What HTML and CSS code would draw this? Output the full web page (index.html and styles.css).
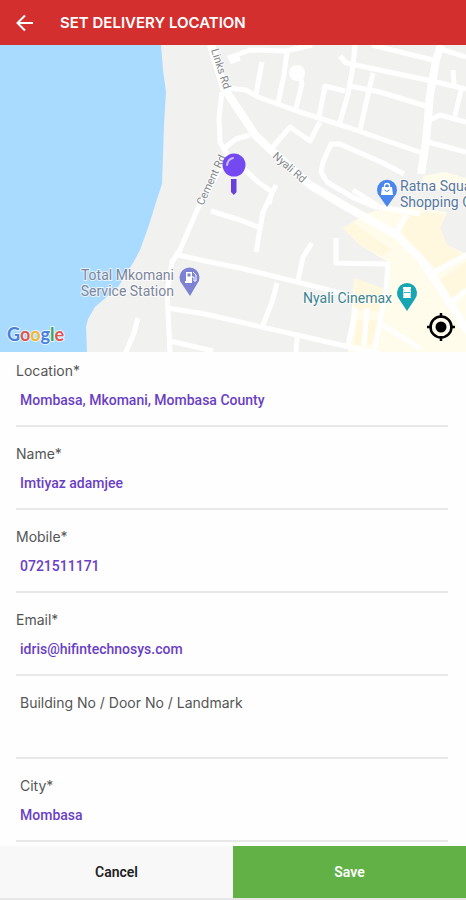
FILE: index.html
```html
<!DOCTYPE html>
<html lang="en">

<head>
    <meta charset="UTF-8">
    <meta name="viewport" content="width=device-width, initial-scale=1.0">
    <title>Set Delivery Location</title>
    <link rel="stylesheet" href="styles.css">
</head>

<body>
    <header class="topbar">
        <button type="button" class="back-btn" aria-label="Back">
            <svg width="18" height="18" viewBox="0 0 18 18">
                <path d="M17 9H2M9 1.5L1.5 9L9 16.5" />
            </svg>
        </button>
        <h1>SET DELIVERY LOCATION</h1>
    </header>

    <div class="map">
        <svg class="map-canvas" viewBox="0 45 466 307">
            <rect class="land" x="0" y="45" width="466" height="307" />
            <path class="water" d="M0 45H161L163 70L166 92L164 125L162 184L157 199L149 225L140 250L133 263L118 287L95 307L88 319L86 327L87 352H0Z" />

            <!-- commercial areas -->
            <path class="area" d="M353 222L365 214L385 208L415 207L447 212L440 228L447 245L466 254V352H348L354 280L388 290V262L360 245L343 228Z" />
            <path class="area-dark" d="M353 222L343 228L360 245L382 256L392 250Z" />
            <path class="area-dark" d="M407 212L445 214L440 228L447 245L462 254L436 268L420 253L402 236Z" />
            <path class="area-dark" d="M354 278L388 290L384 312L354 310Z" />
            <path class="area-dark" d="M440 280L466 262V290L452 300Z" />
            <path class="area-dark" d="M357 320L380 320L374 345L354 345Z" />
            <path class="area" d="M423 176L445 172L466 178V190H423Z" />

            <g class="roads">
                <path d="M222 92L219 118L220 142L228 156L223 164L198 208L180 250L172 262L167 292L170 352" />
                <path d="M222 150L236 139L250 135" />
                <path d="M240 165L258 182L272 192L269 204" />
                <path d="M228 88L246 90L258 97L300 112L350 128L422 153" />
                <path d="M228 58L250 50L286 51L312 45" />
                <path d="M230 62L240 58" />
                <path d="M262 62L256 94" />
                <path d="M287 51L284 75L278 103" />
                <path d="M300 76L302 84L296 108" />
                <path d="M319 117L325 86L345 91" />
                <path d="M355 45L353 66L348 94L340 122" />
                <path d="M373 73L369 90L360 130" />
                <path d="M340 56L346 63L384 71L432 81L466 89" />
                <path d="M372 45L437 61" />
                <path d="M350 86L380 92L426 106" />
                <path d="M430 120L440 115L466 122" />
                <path d="M428 142L466 152" />
                <path d="M461 90L455 116" />
                <path d="M453 70L454 84" />
                <path d="M441 49L466 57" />
                <path d="M272 148L290 127L310 141L320 122" />
                <path d="M378 208L354 198L327 182L321 172L323 162L331 144L340 144L383 163L404 174" />
                <path d="M353 190L380 207L420 214" />
                <path d="M211 211L240 220L258 227" />
                <path d="M276 185L263 212L256 252" />
                <path d="M174 254L205 261L240 268L297 282L345 294" />
                <path d="M312 243L303 257L298 280" />
                <path d="M277 283L272 302L263 325" />
                <path d="M167 308L205 314L240 322L297 335L380 354" />
                <path d="M170 341L213 351" />
                <path d="M297 338L296 352" />
                <path d="M138 318L134 333L125 354" />
                <path d="M336 238L336 263L388 264L386 290L374 352" />
                <path d="M356 308L348 345" />
                <path d="M367 308L364 346" />
                <path d="M382 325L420 348" />
                <path d="M396 232L407 215" />
                <path d="M433 273L468 254" />
                <path d="M450 304L466 290" />
            </g>
            <g class="roads roads-main">
                <path d="M211 45L224 88L256 136L272 151L310 185L345 206L370 220L397 235L420 258L443 292L468 332" />
                <path d="M441 45L436 60L430 95L426 142L421 174" />
            </g>
            <circle class="cul-de-sac" cx="297" cy="73" r="8" />

            <text class="road-name" transform="translate(211 50) rotate(72)">Links Rd</text>
            <text class="road-name" transform="translate(203 206) rotate(-65)">Cement Rd</text>
            <text class="road-name" transform="translate(272 157) rotate(41)">Nyali Rd</text>

            <!-- shopping -->
            <path fill="#4a86ec" d="M387 207L380 197A10 10 0 1 1 394 197Z" />
            <path fill="#fff" d="M382 187H392L393 195H381Z" />
            <path fill="none" stroke="#fff" stroke-width="1.3" d="M384.500 188V186A2.500 2.500 0 0 1 389.500 186V188" />
            <path fill="none" stroke="#4a86ec" d="M384.500 190Q387 193 389.500 190" />
            <text class="poi poi-shop" x="400" y="191">Ratna Square</text>
            <text class="poi poi-shop" x="400" y="207">Shopping Centre</text>

            <!-- fuel -->
            <path fill="#7d83d2" d="M190 296L182 284A10 10 0 1 1 197 284Z" />
            <path fill="#fff" d="M186 272H192V283H185V281H186Z" />
            <path fill="none" stroke="#fff" d="M192 277H194V281H196V275L193 272" />
            <rect fill="#7d83d2" x="187.500" y="273.500" width="3" height="3" />
            <text class="poi poi-fuel" x="174" y="280">Total Mkomani</text>
            <text class="poi poi-fuel" x="174" y="296">Service Station</text>

            <!-- cinema -->
            <path fill="#16a5b2" d="M407 311L399 299A10 10 0 1 1 415 299Z" />
            <path fill="#fff" d="M403 287H411V298H403Z" />
            <path fill="none" stroke="#16a5b2" stroke-width=".8" d="M402 290H404M402 293H404M402 296H404M410 290H412M410 293H412M410 296H412M404 292.500H410" />
            <text class="poi poi-cinema" x="392" y="303">Nyali Cinemax</text>

            <!-- selected spot -->
            <circle fill="#7549f2" cx="234" cy="165" r="11.500" />
            <path fill="none" stroke="#cbbcfb" stroke-width="2" stroke-linecap="round" d="M227 165Q228 159 233 158" />
            <path fill="#6840dc" d="M231 179H236.500V192L233.800 195L231 192Z" />

            <text class="brand" x="7" y="341"><tspan fill="#4a80dc">G</tspan><tspan fill="#e2544b">o</tspan><tspan fill="#efb92f">o</tspan><tspan fill="#4a80dc">g</tspan><tspan fill="#3da45a">l</tspan><tspan fill="#e2544b">e</tspan></text>
        </svg>

        <button type="button" class="locate-btn" aria-label="My location">
            <svg width="28" height="28" viewBox="0 0 28 28">
                <circle cx="14" cy="14" r="10.500" fill="none" stroke="#000" stroke-width="2.500" />
                <circle cx="14" cy="14" r="5.500" />
                <path d="M14 0V5M14 23V28M0 14H5M23 14H28" stroke="#000" stroke-width="2.500" />
            </svg>
        </button>
    </div>

    <form class="address-form" id="address-form">
        <div class="field">
            <label for="location">Location*</label>
            <input type="text" id="location" value="Mombasa, Mkomani, Mombasa County">
        </div>
        <div class="field">
            <label for="name">Name*</label>
            <input type="text" id="name" value="Imtiyaz adamjee">
        </div>
        <div class="field">
            <label for="mobile">Mobile*</label>
            <input type="tel" id="mobile" value="0721511171">
        </div>
        <div class="field">
            <label for="email">Email*</label>
            <input type="email" id="email" value="idris@hifintechnosys.com">
        </div>
        <div class="field field-indent">
            <label for="building">Building No / Door No / Landmark</label>
            <input type="text" id="building">
        </div>
        <div class="field field-indent">
            <label for="city">City*</label>
            <input type="text" id="city" value="Mombasa">
        </div>
    </form>

    <footer class="actions">
        <button type="button" class="cancel-btn">Cancel</button>
        <button type="submit" class="save-btn" form="address-form">Save</button>
    </footer>
</body>

</html>
```
FILE: styles.css
```css
* {
    box-sizing: border-box;
}

body {
    font-family: Roboto, "Liberation Sans", sans-serif;
    margin: 0;
    background: #fefefe;
    color: #444;
}

button {
    padding: 0;
    border: none;
    background: none;
    font-family: inherit;
    cursor: pointer;
}

.topbar {
    display: flex;
    align-items: center;
    gap: 26px;
    height: 45px;
    padding: 0 16px;
    background: #d32f2f;
}

.topbar h1 {
    margin: 0;
    font-family: Inter, sans-serif;
    font-size: 15px;
    font-weight: 600;
    color: #fff;
}

.back-btn svg {
    display: block;
    fill: none;
    stroke: #fff;
    stroke-width: 2;
}

.map {
    position: relative;
}

.map-canvas {
    display: block;
    width: 100%;
}

.land {
    fill: #f1f1f0;
}

.water {
    fill: #a9daff;
}

.area {
    fill: #fffcec;
}

.area-dark {
    fill: #fff8df;
}

.roads {
    fill: none;
    stroke: #fff;
    stroke-width: 5;
    stroke-linejoin: round;
}

.roads-main {
    stroke-width: 8;
}

.cul-de-sac {
    fill: #fff;
}

.road-name {
    font-size: 11px;
    fill: #84888c;
}

.road-name,
.poi,
.brand {
    stroke: #fff;
    stroke-width: 2px;
    stroke-opacity: 0.7;
    paint-order: stroke;
}

.poi {
    font-size: 14px;
}

.poi-shop {
    fill: #56789f;
}

.poi-fuel {
    fill: #7d869c;
    text-anchor: end;
}

.poi-cinema {
    fill: #3b8390;
    text-anchor: end;
}

.brand {
    font-family: Lato, sans-serif;
    font-size: 18px;
    font-weight: 700;
}

.locate-btn {
    position: absolute;
    right: 11px;
    bottom: 11px;
}

.locate-btn svg {
    display: block;
}

.address-form {
    display: flex;
    flex-direction: column;
    gap: 17px;
    padding: 9px 18px 4px 16px;
}

.field {
    display: flex;
    flex-direction: column;
    gap: 7px;
    padding-bottom: 13px;
    border-bottom: 2px solid #e8e8e8;
}

.field label {
    font-family: Inter, sans-serif;
    font-size: 14px;
    line-height: 20px;
    color: #555;
}

.field-indent label {
    padding-left: 4px;
}

.field input {
    width: 100%;
    height: 24px;
    padding: 0 4px;
    border: none;
    outline: none;
    background: none;
    font-family: inherit;
    font-size: 14px;
    font-weight: 500;
    color: #6a3fc4;
}

.actions {
    display: flex;
    border-bottom: 2px solid #e6e6e6;
}

.actions button {
    flex: 1;
    height: 52px;
    font-size: 14px;
    font-weight: 600;
}

.cancel-btn {
    background: #f8f8f8;
    color: #222;
}

.save-btn {
    background: #62b146;
    color: #fff;
}
```
